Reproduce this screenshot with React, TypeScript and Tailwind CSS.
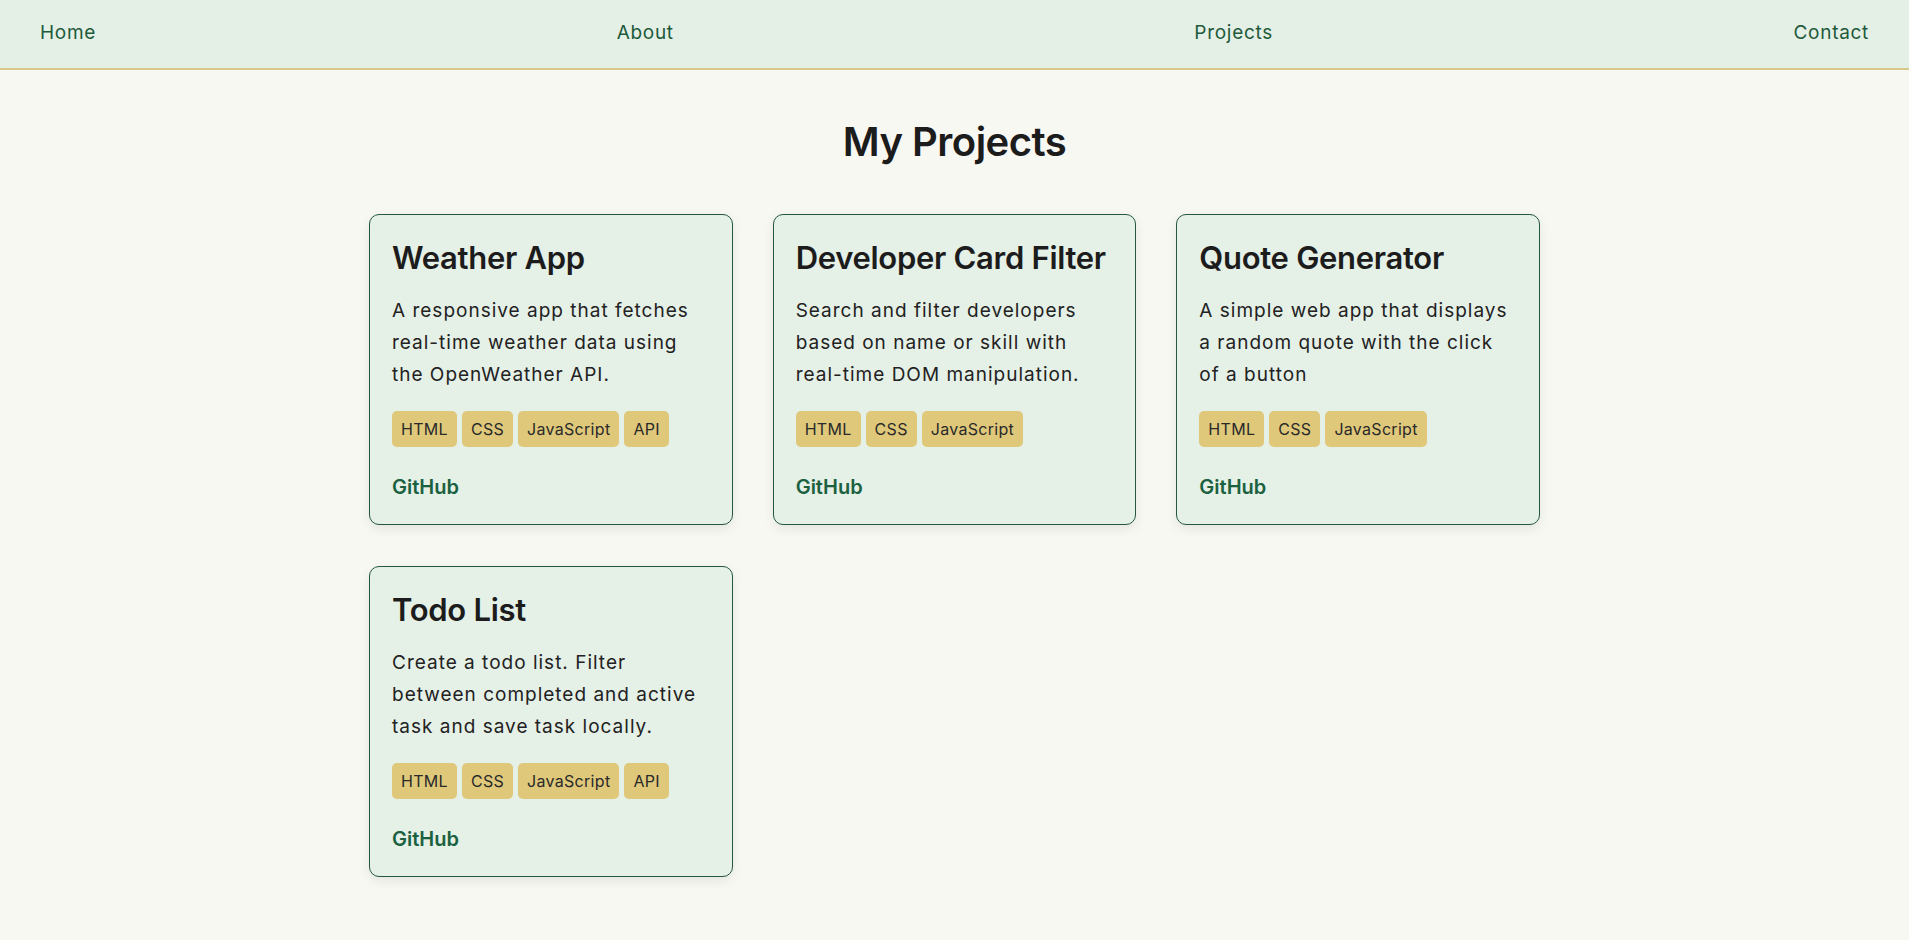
import React from 'react';

type Project = {
  title: string;
  description: string;
  tags: string[];
};

const projects: Project[] = [
  {
    title: 'Weather App',
    description: 'A responsive app that fetches real-time weather data using the OpenWeather API.',
    tags: ['HTML', 'CSS', 'JavaScript', 'API'],
  },
  {
    title: 'Developer Card Filter',
    description: 'Search and filter developers based on name or skill with real-time DOM manipulation.',
    tags: ['HTML', 'CSS', 'JavaScript'],
  },
  {
    title: 'Quote Generator',
    description: 'A simple web app that displays a random quote with the click of a button',
    tags: ['HTML', 'CSS', 'JavaScript'],
  },
  {
    title: 'Todo List',
    description: 'Create a todo list. Filter between completed and active task and save task locally.',
    tags: ['HTML', 'CSS', 'JavaScript', 'API'],
  },
];

function ProjectCard({ project }: { project: Project }) {
  return (
    <div className="flex flex-col px-[22px] pt-[22px] pb-[23px] bg-[#e5f0e7] border border-[#24573c] rounded-[10px] shadow-[0_4px_12px_rgba(0,0,0,0.08)]">
      <h3 className="text-[31px] leading-[41px] font-semibold text-[#1c1c1c] tracking-[-0.3px]">{project.title}</h3>
      <p className="mt-[17px] text-[19px] leading-[32px] text-[#222] tracking-[1px]">{project.description}</p>
      <div className="mt-[20px] flex flex-wrap gap-[5px]">
        {project.tags.map((tag) => (
          <span key={tag} className="px-[9px] h-[36px] flex items-center bg-[#dfc87a] rounded-[5px] text-[16px] tracking-[0.3px] text-[#2a2a2a]">
            {tag}
          </span>
        ))}
      </div>
      <a href="#" className="mt-[26px] text-[20px] leading-[28px] font-semibold text-[#1b6140]">
        GitHub
      </a>
    </div>
  );
}

export default function App() {
  return (
    <div className="min-h-[940px] bg-[#f8f8f3] font-['Inter',sans-serif]">
      {/* Nav */}
      <nav className="h-[70px] flex items-center justify-between px-10 bg-[#e4efe6] border-b-2 border-[#d8c88a]">
        {['Home', 'About', 'Projects', 'Contact'].map((l) => (
          <a key={l} href="#" className="text-[19px] leading-[28px] tracking-[0.7px] text-[#1d5a3a] -mt-[2px]">
            {l}
          </a>
        ))}
      </nav>

      <main className="pt-[48px] pb-16">
        <h1 className="text-center text-[40px] leading-[48px] font-semibold text-[#1c1c1c] tracking-[-0.5px]">My Projects</h1>
        <div className="w-[1171px] mx-auto mt-[48px] grid grid-cols-3 gap-x-[40px] gap-y-[41px]">
          {projects.map((p) => (
            <ProjectCard key={p.title} project={p} />
          ))}
        </div>
      </main>
    </div>
  );
}
